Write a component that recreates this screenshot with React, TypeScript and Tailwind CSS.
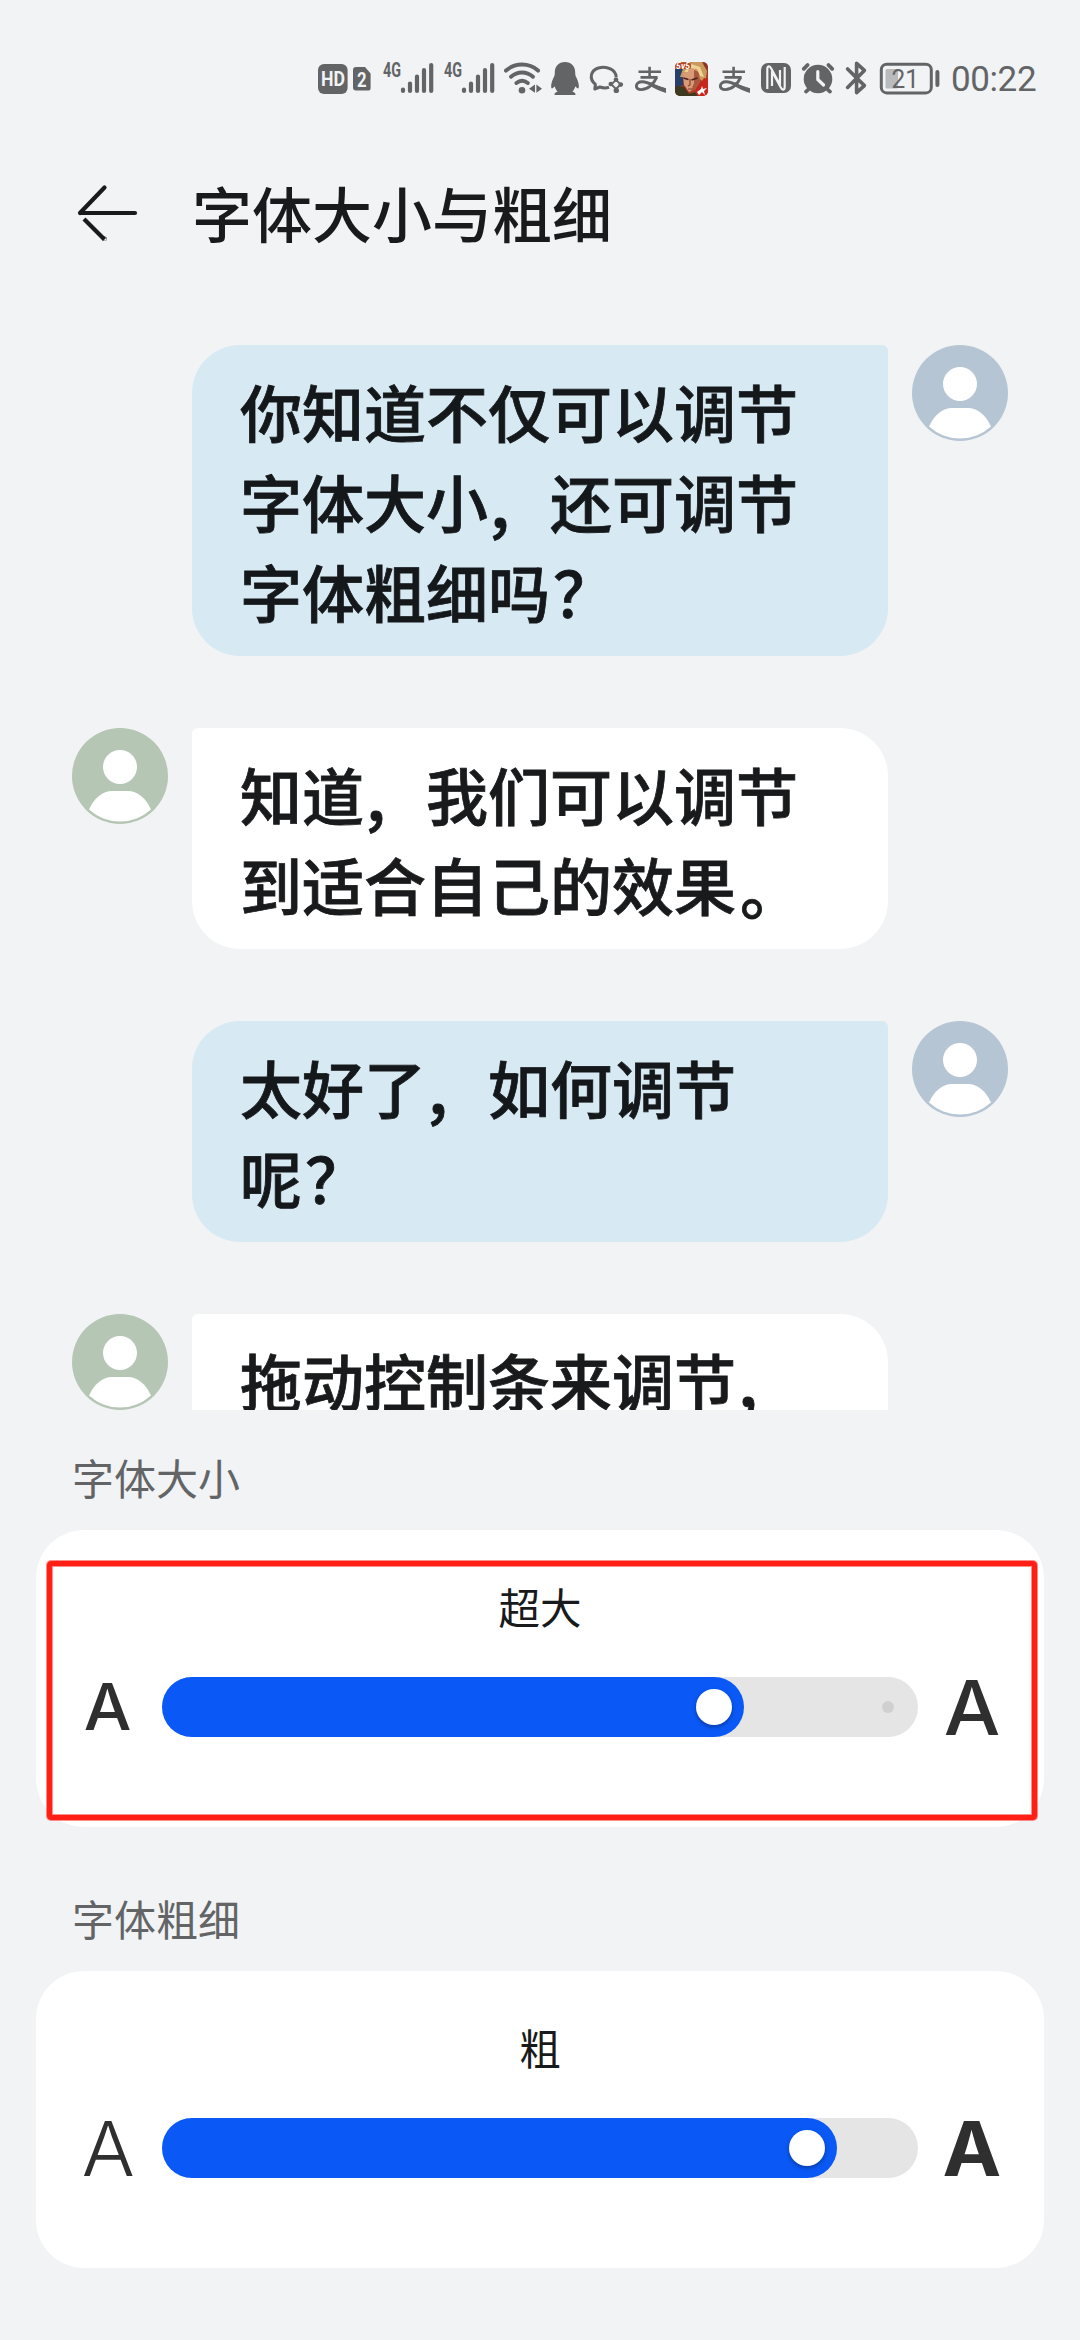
import type { ReactNode } from "react";

const INK = "#636466";

/* Status bar glyph: every glyph shares one 40px tall band and one x axis. */
function Glyph({ x, w, children }: { x: number; w: number; children: ReactNode }) {
  return (
    <svg width={w} height={40} viewBox={`${x} 58 ${w} 40`} className="block shrink-0" fill="none">
      {children}
    </svg>
  );
}

function Signal({ x }: { x: number }) {
  return (
    <Glyph x={x} w={61}>
      <text x={x + 3} y={76.5} fontSize={19.5} fontWeight={700} fill={INK} textLength={18} lengthAdjust="spacingAndGlyphs" fontFamily="Roboto, sans-serif">
        4G
      </text>
      <g stroke={INK} strokeWidth={4.2} strokeLinecap="round">
        <path d={`M${x + 23} 89.6v1.4M${x + 30} 83.5V91M${x + 37} 76.5V91M${x + 44} 70.2V91M${x + 51.2} 65V91`} />
      </g>
    </Glyph>
  );
}

function Alipay({ x, w }: { x: number; w: number }) {
  return (
    <Glyph x={x} w={w}>
      <g transform={`translate(${x + 5} 66)`} stroke={INK}>
        <path d="M3.5 5.8H26M14.6 0.8V11.2M5.5 11.4H22.6" strokeWidth={2.6} />
        <path d="M21.6 11.4C18.6 18.6 12.6 23.6 6.2 23.6C-0.8 23.6 0 15.6 7.2 15.8C14 16 20 20.6 30.4 24" strokeWidth={2.9} />
        <path d="M18 18.2L31 22.2V27C25 25.2 20.4 22.6 16 20.4Z" fill={INK} stroke="none" />
      </g>
    </Glyph>
  );
}

function StatusBar() {
  return (
    <div className="flex h-[156px] items-start pt-[58px] pl-[316px]">
      <Glyph x={316} w={34}>
        <rect x={318} y={64} width={29.6} height={30} rx={6} fill={INK} />
        <text x={321} y={86} fontSize={19.5} fontWeight={700} fill="#f1f3f5" textLength={24} lengthAdjust="spacingAndGlyphs" fontFamily="Roboto, sans-serif">
          HD
        </text>
      </Glyph>
      <Glyph x={350} w={30}>
        <path d="M356 67h9l5.6 6.4V88a2.6 2.6 0 0 1-2.6 2.6H356a3 3 0 0 1-3-3V70a3 3 0 0 1 3-3z" fill={INK} />
        <text x={357} y={86.8} fontSize={21} fontWeight={700} fill="#f1f3f5" textLength={9.6} lengthAdjust="spacingAndGlyphs" fontFamily="Roboto, sans-serif">
          2
        </text>
      </Glyph>
      <Signal x={380} />
      <Signal x={441} />
      <Glyph x={502} w={46}>
        <g stroke={INK} strokeWidth={4} strokeLinecap="round">
          <path d="M506 70.6C515 62.6 529 62.6 538 70.6" />
          <path d="M511 76.8C517.6 71.2 526.4 71.2 533 76.8" />
          <path d="M516.4 83C520 80.2 524.2 80.2 527.8 83" />
        </g>
        <circle cx={522} cy={90.2} r={3.3} fill={INK} />
        <path d="M535 84.6v8.2l-6-4.1zM536.4 84.6l5.6 4.1-5.6 4.1z" fill={INK} />
      </Glyph>
      <Glyph x={548} w={38}>
        <path
          d="M565 62c-6.400 0-10.200 4.600-10.200 10.400 0 2.600-.4 3.600-1.400 5.600-1.600 3.200-2.600 7.200-2.200 9.400.4 1.800 1.800 1 3.400-1.200.6 2.200 1.600 3.800 3 5.400-2.400.8-3.400 1.800-3 3.400h20.800c.4-1.600-.6-2.600-3-3.400 1.400-1.600 2.400-3.200 3-5.400 1.600 2.200 3 3 3.400 1.200.4-2.200-.6-6.200-2.200-9.400-1-2-1.400-3-1.400-5.600C575.200 66.600 571.400 62 565 62z"
          fill={INK}
        />
      </Glyph>
      <Glyph x={586} w={44}>
        <path d="M609 87.300C606 88.200 602.600 88 599.800 87L594.800 89L595.400 84.400C588.600 79 590.600 70.400 598.400 68C607 65.400 616 70 616.200 77" stroke={INK} strokeWidth={3} strokeLinejoin="round" />
        <path d="M616 79.800L620.600 84.400L616 89L611.400 84.400Z" stroke={INK} strokeWidth={1.9} />
        <circle cx={616} cy={79.600} r={2.300} fill={INK} />
        <circle cx={620.800} cy={84.600} r={2.300} fill={INK} />
        <circle cx={616.300} cy={90.400} r={2.700} fill={INK} />
        <circle cx={610.800} cy={84} r={2.300} fill={INK} />
      </Glyph>
      <Alipay x={630} w={43} />
      <Glyph x={673} w={41}>
        <defs>
          <clipPath id="game">
            <rect x={675} y={62} width={33} height={34} rx={5} />
          </clipPath>
          <linearGradient id="gameBg" x1="0" y1="0" x2="1" y2="1">
            <stop offset="0" stopColor="#c8743a" />
            <stop offset=".5" stopColor="#8a3324" />
            <stop offset="1" stopColor="#e0482a" />
          </linearGradient>
        </defs>
        <g clipPath="url(#game)">
          <rect x={675} y={62} width={33} height={34} fill="url(#gameBg)" />
          <path d="M675 69h8v16l-8 3z" fill="#27406b" />
          <path d="M680 77l4-11 8-4h10l5 9-2 13-6-6z" fill="#c89a5c" />
          <path d="M683 74l7-6 9 3 1 10-5 8-6 3-5-7z" fill="#d99a78" />
          <path d="M694 70l5 2 1 9-5 8-4 2 3-8z" fill="#a8583e" />
          <path d="M691 64l9 3 4 10-4-1-3-7-8-1zM684 72l5-5-1 5z" fill="#efd294" />
          <path d="M683.500 78l5 1.500M691.500 80l6-2" stroke="#4b231c" strokeWidth={1.800} />
          <path d="M690 79v6l-2 1M688 89h4" stroke="#8a4030" strokeWidth={1.200} />
          <path d="M675 86l9 1 5 7 6-2 3 4h-23z" fill="#3d3a20" />
          <path d="M695 91l9-13 4 1v17h-9z" fill="#c8261c" />
          <path d="M697 92l4-3 1-3 1 3 4-1-3 3 1 4-3-3-3 3z" fill="#fff" />
          <rect x={675} y={63} width={16} height={6} rx={2} fill="#b5482a" />
          <text x={676} y={69} fontSize={8.500} fontWeight={700} fontStyle="italic" fill="#fff" textLength={14} fontFamily="Roboto, sans-serif">
            5v5
          </text>
        </g>
      </Glyph>
      <Alipay x={714} w={43} />
      <Glyph x={757} w={41}>
        <rect x={761} y={63} width={30} height={30} rx={7} fill={INK} />
        <path d="M767.300 89V69.500C767.300 65.600 769.600 65.400 771.200 68.400L780 84.800V70" stroke="#f1f3f5" strokeWidth={2.200} />
        <path d="M784.700 67V86.500C784.700 90.400 782.400 90.600 780.800 87.600L772 71.200V86" stroke="#f1f3f5" strokeWidth={2.200} />
      </Glyph>
      <Glyph x={798} w={42}>
        <circle cx={818} cy={79} r={14.300} fill={INK} />
        <path d="M803.800 68.800L807.600 65M832.200 68.800L828.400 65M808 89.800L806 91.600M828 89.800L830 91.600" stroke={INK} strokeWidth={3.800} strokeLinecap="round" />
        <path d="M817.800 71.500V79.500L823.600 85" stroke="#f1f3f5" strokeWidth={3.200} strokeLinecap="round" strokeLinejoin="round" />
      </Glyph>
      <Glyph x={840} w={37}>
        <path d="M847.600 69L864.400 85.600L856.600 92.600V63.400L864.400 70.400L847.600 87.400" stroke={INK} strokeWidth={3.600} strokeLinecap="round" strokeLinejoin="round" />
      </Glyph>
      <Glyph x={877} w={69}>
        <rect x={881.300} y={64.300} width={50} height={28.600} rx={5.500} stroke={INK} strokeWidth={3} />
        <rect x={885.500} y={69} width={12.500} height={19.500} rx={1.500} fill="#b9bbbd" />
        <rect x={935.400} y={70} width={4} height={17} rx={2} fill={INK} />
        <text x={891.500} y={88} fontSize={26} fill={INK} textLength={27.500} lengthAdjust="spacingAndGlyphs" fontFamily="Roboto, sans-serif">
          21
        </text>
      </Glyph>
      <div className="mt-[2px] ml-[5px] font-[Roboto,sans-serif] text-[35px] leading-[40px] tracking-[-0.4px] text-[#636466]">00:22</div>
    </div>
  );
}

function Header() {
  return (
    <header className="flex h-[117px] items-center pl-[76px]">
      <svg width={64} height={60} viewBox="0 0 64 60" fill="none" stroke="#191a1b" strokeWidth={4.200} strokeLinecap="round" className="relative -top-[2px]">
        <path d="M4 30H59M4 30L28.500 4.500" />
        <path d="M8 36L28.500 56.500" strokeLinecap="butt" />
        <circle cx={28.500} cy={55.800} r={0.200} />
      </svg>
      <h1 className="ml-[52px] pb-[5px] text-[60px] leading-[80px] font-medium">字体大小与粗细</h1>
    </header>
  );
}

function Avatar({ color }: { color: string }) {
  return (
    <svg width={96} height={96} viewBox="0 0 96 96" className="block shrink-0">
      <circle cx={48} cy={48} r={48} fill={color} />
      <circle cx={48} cy={39} r={17} fill="#fff" />
      <path d="M17 81.500C22 70 31 63 40 63H56C65 63 74 70 79 81.500A46 46 0 0 1 17 81.500Z" fill="#fff" />
    </svg>
  );
}

/* Punctuation sits slightly off the default position of the CJK face. */
function Comma() {
  return <span className="relative top-[5px] -left-1">，</span>;
}

function Stop() {
  return <span className="relative top-1 left-1">。</span>;
}

function Query() {
  return <span className="relative left-[3px]">？</span>;
}

function Sent({ children }: { children: ReactNode }) {
  return (
    <div className="flex shrink-0 items-start gap-6 pl-[192px]">
      <div className="w-[696px] rounded-[48px] rounded-tr-[6px] bg-[#d7e9f3] px-12 pt-[21px] pb-5 text-[62px] leading-[90px] font-medium text-[#15181a] [-webkit-text-stroke:0.8px_#15181a]">{children}</div>
      <Avatar color="#b6c5d3" />
    </div>
  );
}

function Received({ children }: { children: ReactNode }) {
  return (
    <div className="flex shrink-0 items-start gap-6 pl-[72px]">
      <Avatar color="#b6c6b4" />
      <div className="min-h-[221px] w-[696px] rounded-[48px] rounded-tl-[6px] bg-white px-12 pt-[21px] pb-5 text-[62px] leading-[90px] font-medium [-webkit-text-stroke:0.8px_#191a1b]">{children}</div>
    </div>
  );
}

function Slider({ value, endDot }: { value: number; endDot?: boolean }) {
  return (
    <div className="flex h-[60px] w-[756px] items-center rounded-full bg-[#e5e5e5]">
      <div className="flex h-full items-center justify-end rounded-full bg-[#0a59f7] pr-3" style={{ width: value }}>
        <div className="size-9 rounded-full bg-white shadow-[0_2px_4px_rgba(0,0,0,0.35)]" />
      </div>
      {endDot && <div className="mr-6 ml-auto size-3 rounded-full bg-[#d0d0d0]" />}
    </div>
  );
}

function Card({ title, left, right, slider }: { title: string; left: ReactNode; right: ReactNode; slider: ReactNode }) {
  return (
    <div className="mx-9 h-[297px] rounded-[48px] bg-white pt-[46px]">
      <div className="h-[101px] text-center text-[41.5px] leading-[60px]">{title}</div>
      <div className="flex h-[60px] items-center font-[Inter,sans-serif] leading-none text-[#2f2f2f]">
        <div className="flex w-[126px] justify-center pr-[18px] pl-[36px]">{left}</div>
        {slider}
        <div className="flex w-[126px] justify-center pr-[30px] pl-[12px]">{right}</div>
      </div>
    </div>
  );
}

export default function App() {
  return (
    <div className="h-[2340px] w-[1080px] overflow-hidden bg-[#f1f3f5] font-['Noto_Sans_CJK_SC',sans-serif] text-[#191a1b]">
      <StatusBar />
      <Header />
      <main className="flex h-[1137px] flex-col gap-[72px] overflow-hidden pt-[72px]">
        <Sent>
          你知道不仅可以调节字体大小
          <Comma />
          还可调节字体粗细吗
          <Query />
        </Sent>
        <Received>
          知道
          <Comma />
          我们可以调节到适合自己的效果
          <Stop />
        </Received>
        <Sent>
          太好了
          <Comma />
          如何调节呢
          <Query />
        </Sent>
        <Received>
          拖动控制条来调节
          <Comma />
        </Received>
      </main>
      <div className="flex h-[120px] items-center pt-[13px] pl-[72px] text-[42px] leading-[60px] text-[#636466]">字体大小</div>
      <section className="relative">
        <Card
          title="超大"
          left={<span className="scale-x-105 text-[64px] font-medium">A</span>}
          right={<span className="scale-x-105 text-[76px] font-medium">A</span>}
          slider={<Slider value={582} endDot />}
        />
        <div className="absolute top-[31px] left-[47px] h-[259px] w-[990px] rounded-[4px] border-[5px] border-[#ff1f14] shadow-[0_0_0_1px_rgba(255,31,20,0.5),inset_0_0_0_1px_rgba(255,31,20,0.5)]" />
      </section>
      <div className="flex h-[144px] items-center pt-[38px] pl-[72px] text-[42px] leading-[60px] text-[#636466]">字体粗细</div>
      <Card
        title="粗"
        left={<span className="scale-x-105 text-[75px] font-light">A</span>}
        right={<span className="scale-x-105 text-[75px] font-bold">A</span>}
        slider={<Slider value={675} />}
      />
    </div>
  );
}
